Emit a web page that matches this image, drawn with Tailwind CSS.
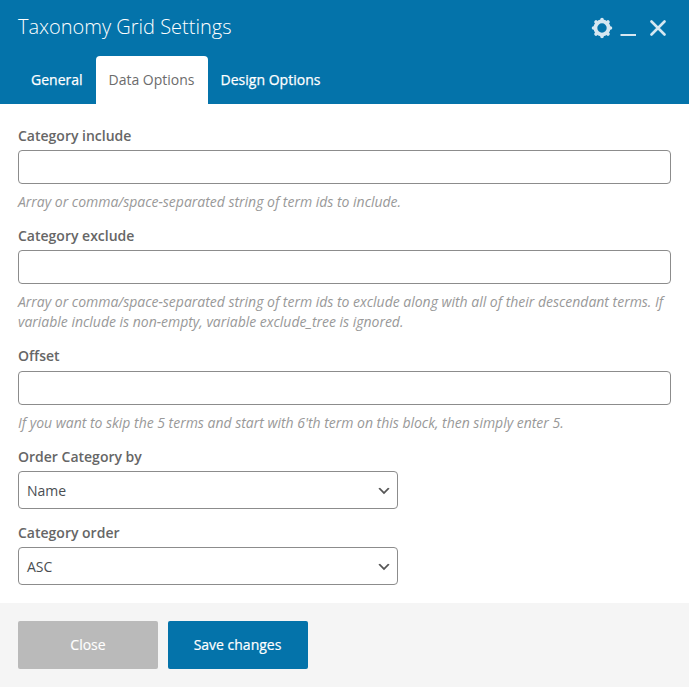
<!DOCTYPE html>
<html lang="en">
<head>
<meta charset="utf-8">
<title>Taxonomy Grid Settings</title>
<script src="https://cdn.jsdelivr.net/npm/@tailwindcss/browser@4"></script>
</head>
<body class="w-[689px] h-[687px] flex flex-col overflow-hidden bg-white font-['Open_Sans',sans-serif] text-sm leading-5 text-[#666]">
<header class="h-[104px] shrink-0 bg-[#0473aa] text-white flex flex-col justify-between">
  <div class="flex justify-between pl-[18px] pr-[23px] pt-[12px]">
    <h1 class="text-[20px] leading-[30px] font-light">Taxonomy Grid Settings</h1>
    <div class="flex pt-[5px] text-[#d6e7f1]">
      <svg class="w-[22px] h-[22px] mr-[7px]" viewBox="-11 -11 22 22" fill="none" stroke="currentColor" stroke-linecap="round"><circle r="6.600" stroke-width="3.800"/><path stroke-width="3.600" d="M0-8.500V-7.500M0 8.500V7.500M-8.500 0H-7.500M8.500 0H7.500M-6-6L-5.300-5.300M6-6L5.300-5.300M-6 6L-5.300 5.300M6 6L5.300 5.300"/></svg>
      <svg class="w-4 h-[22px] mr-[14px]" viewBox="0 0 16 22"><path d="M0.500 18H16" stroke="currentColor" stroke-width="2"/></svg>
      <svg class="w-4 h-[22px]" viewBox="0 0 16 22"><path d="M1.500 4.500l13 13M14.500 4.500L1.500 17.500" stroke="currentColor" stroke-width="2.600" stroke-linecap="round"/></svg>
    </div>
  </div>
  <nav class="flex h-12 pl-[18px] leading-[48px]">
    <a class="w-[78px] pl-[13px] [-webkit-text-stroke:0.25px_white]">General</a>
    <a class="w-[112px] pl-[12.500px] rounded-t-[4px] bg-white text-[#6c6c6c]">Data Options</a>
    <a class="pl-[12.500px] tracking-[0.02px] [-webkit-text-stroke:0.25px_white]">Design Options</a>
  </nav>
</header>
<main class="flex-1 px-[18px] pt-[21px]">
  <section class="h-[100px]">
    <label class="block leading-[22px] font-semibold mb-[3px]">Category include</label>
    <div class="h-[34px] border border-[#8c8c8c] rounded-[4px]"></div>
    <p class="mt-[8px] italic text-[#999] tracking-[-0.015px]">Array or comma/space-separated string of term ids to include.</p>
  </section>
  <section class="h-[120px]">
    <label class="block leading-[22px] font-semibold mb-[3px]">Category exclude</label>
    <div class="h-[34px] border border-[#8c8c8c] rounded-[4px]"></div>
    <p class="mt-[8px] italic text-[#999] tracking-[-0.015px]">Array or comma/space-separated string of term ids to exclude along with all of their descendant terms. If variable include is non-empty, variable exclude_tree is ignored.</p>
  </section>
  <section class="h-[101px]">
    <label class="block leading-[22px] font-semibold mb-[4px]">Offset</label>
    <div class="h-[34px] border border-[#8c8c8c] rounded-[4px]"></div>
    <p class="mt-[8px] italic text-[#999] tracking-[-0.015px]">If you want to skip the 5 terms and start with 6'th term on this block, then simply enter 5.</p>
  </section>
  <section class="h-[76px]">
    <label class="block leading-[22px] font-semibold mb-[3px]">Order Category by</label>
    <div class="w-[380px] h-[38px] border border-[#8c8c8c] rounded-[4px] flex items-center justify-between pl-2 pr-[5px] pt-[2px] text-[#4a4e52]"><span>Name</span><svg class="w-4 h-4" viewBox="0 0 20 20"><path d="M5 6l5 5 5-5 2 1-7 7-7-7 2-1z" fill="#555"/></svg></div>
  </section>
  <section>
    <label class="block leading-[22px] font-semibold mb-[3px]">Category order</label>
    <div class="w-[380px] h-[38px] border border-[#8c8c8c] rounded-[4px] flex items-center justify-between pl-2 pr-[5px] pt-[2px] text-[#4a4e52]"><span>ASC</span><svg class="w-4 h-4" viewBox="0 0 20 20"><path d="M5 6l5 5 5-5 2 1-7 7-7-7 2-1z" fill="#555"/></svg></div>
  </section>
</main>
<footer class="h-[84px] shrink-0 bg-[#f5f5f5] flex gap-[10px] px-[18px] pt-[18px] text-white">
  <button class="w-[140px] h-12 rounded-[2px] bg-[#bababa] [-webkit-text-stroke:0.15px_white]">Close</button>
  <button class="w-[140px] h-12 rounded-[2px] bg-[#0473aa] pr-px [-webkit-text-stroke:0.2px_white]">Save changes</button>
</footer>
</body>
</html>
